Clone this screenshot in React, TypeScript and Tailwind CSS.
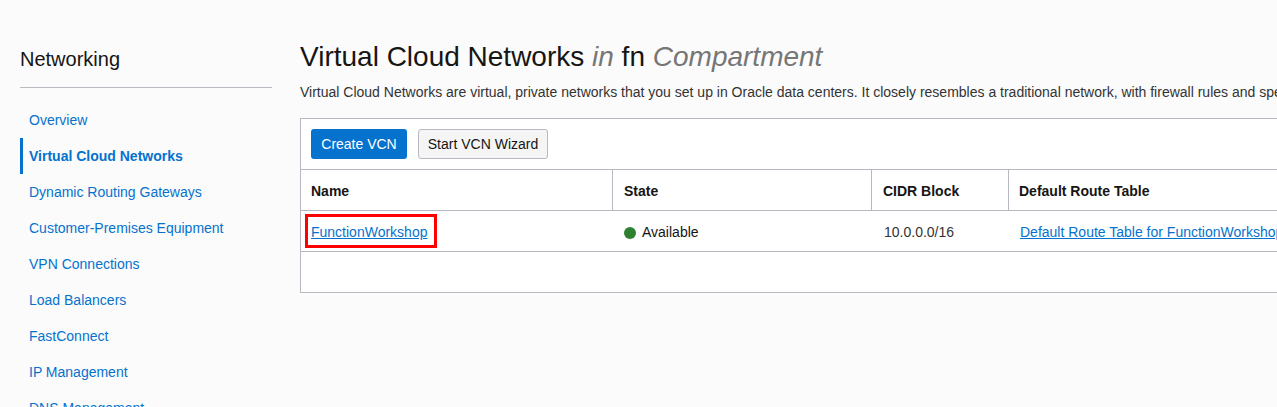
export default function App() {
  const nav = [
    "Overview",
    "Virtual Cloud Networks",
    "Dynamic Routing Gateways",
    "Customer-Premises Equipment",
    "VPN Connections",
    "Load Balancers",
    "FastConnect",
    "IP Management",
    "DNS Management",
  ];
  return (
    <div className="flex w-full h-[407px] overflow-hidden bg-[#fbfbfb] text-[#161513]"
      style={{ fontFamily: '"Liberation Sans", Arial, sans-serif' }}>
      {/* side nav */}
      <aside className="w-[272px] shrink-0 pl-[20px] pt-[47px]">
        <h2 className="text-[20px] leading-[24px] text-[#161513]">Networking</h2>
        <div className="mt-[16px] border-t border-[#b9bcc2]" />
        <ul className="mt-[14px]">
          {nav.map(n => n === "Virtual Cloud Networks" ? (
            <li key={n} className="h-[36px] flex items-center border-l-[3px] border-[#0572ce] pl-[6px] text-[14px] font-bold text-[#0572ce] whitespace-nowrap">{n}</li>
          ) : (
            <li key={n} className="h-[36px] flex items-center pl-[9px] text-[14px] text-[#0572ce] whitespace-nowrap">{n}</li>
          ))}
        </ul>
      </aside>

      {/* main */}
      <main className="ml-[28px] pt-[41px] min-w-0">
        <h1 className="text-[28px] leading-[32px] whitespace-nowrap">
          Virtual Cloud Networks <i className="text-[#767676]">in</i> fn <i className="text-[#767676]">Compartment</i>
        </h1>
        <p className="mt-[11px] text-[14px] leading-[16px] text-[#333333] whitespace-nowrap">
          Virtual Cloud Networks are virtual, private networks that you set up in Oracle data centers. It closely resembles a traditional network, with firewall rules and specific types of communication gateways that you can choose to use.
        </p>

        <div className="mt-[18px] w-[1100px] bg-white border border-[#b6bac0]">
          <div className="flex gap-[11px] px-[10px] py-[10px] border-b border-[#b6bac0]">
            <button className="h-[30px] w-[96px] rounded-[3px] bg-[#0572ce] text-white text-[14px]">Create VCN</button>
            <button className="h-[30px] w-[130px] rounded-[3px] bg-[#f5f5f5] border border-[#b6bac0] text-[#161513] text-[14px]">Start VCN Wizard</button>
          </div>

          {/* header */}
          <div className="flex h-[41px] border-b border-[#b6bac0] text-[14px] font-bold">
            <div className="w-[311px] flex items-center pl-[10px] pt-[3px]">Name</div>
            <div className="w-[259px] flex items-center pl-[11px] pt-[3px] border-l border-[#b6bac0]">State</div>
            <div className="w-[137px] flex items-center pl-[11px] pt-[3px] border-l border-[#b6bac0]">CIDR Block</div>
            <div className="flex-1 flex items-center pl-[10px] pt-[3px] border-l border-[#b6bac0]">Default Route Table</div>
          </div>

          {/* row */}
          <div className="flex h-[41px] border-b border-[#b6bac0] text-[14px]">
            <div className="w-[311px] flex items-center pl-[4px] pb-[1px]">
              <span className="h-[34px] flex items-center border-[3px] border-[#ff0000] pl-[3px] pr-[7px] pt-[3px]">
                <a href="#" className="text-[#0572ce] underline">FunctionWorkshop</a>
              </span>
            </div>
            <div className="w-[260px] flex items-center gap-[6px] pl-[12px] pt-[3px]">
              <span className="w-[12px] h-[12px] rounded-full bg-[#2f8132]" />
              <span className="text-[#161513]">Available</span>
            </div>
            <div className="w-[137px] flex items-center pl-[12px] pt-[3px] text-[#333333]">10.0.0.0/16</div>
            <div className="flex-1 flex items-center pl-[11px] pt-[3px]">
              <a href="#" className="text-[#0572ce] underline whitespace-nowrap">Default Route Table for FunctionWorkshop</a>
            </div>
          </div>

          <div className="h-[40px]" />
        </div>
      </main>
    </div>
  );
}
